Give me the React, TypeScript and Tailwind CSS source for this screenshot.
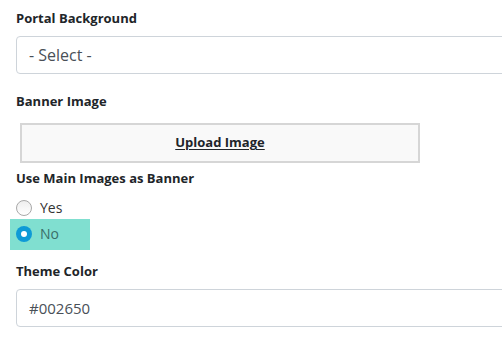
import React from "react";

export default function App() {
  return (
    <div
      className="w-[502px] h-[345px] overflow-hidden bg-white text-[#212529]"
      style={{ fontFamily: '"Open Sans", "Noto Sans", sans-serif' }}
    >
      <div className="pt-[8px]">
        <div className="pl-4 h-5 leading-5 text-[13px] font-bold">Portal Background</div>
        <div className="ml-4 mt-2 w-[520px] h-[38px] border border-[#ced4da] rounded-[4px] flex items-center pl-3 text-[16px] text-[#495057]">
          - Select -
        </div>
        <div className="pl-4 mt-[17px] h-5 leading-5 text-[13px] font-bold">Banner Image</div>
        <div className="ml-5 mt-3 w-[400px] h-10 border-2 border-[#d6d6d6] bg-[#f9f9f9] flex items-center justify-center">
          <span className="text-[13px] font-bold underline underline-offset-2">Upload Image</span>
        </div>
        <div className="pl-4 mt-[5px] h-5 leading-5 text-[13px] font-bold">Use Main Images as Banner</div>
        <div>
          <div className="ml-[10px] w-[80px] h-[31px] pt-[8px] flex items-center pl-[6px] gap-2">
            <span className="w-4 h-4 rounded-full border border-[#a8a8a8] bg-gradient-to-b from-[#eeeeee] to-white" />
            <span className="text-[14px] text-[#333]">Yes</span>
          </div>
          <div className="ml-[10px] w-[80px] h-[31px] pb-[2px] flex items-center pl-[6px] gap-2 bg-[#80dfd0]">
            <span className="w-4 h-4 rounded-full bg-[#0e9ad6] flex items-center justify-center">
              <span className="w-[6px] h-[6px] rounded-full bg-white" />
            </span>
            <span className="text-[14px] text-[#3a6e68]">No</span>
          </div>
        </div>
        <div className="pl-4 mt-[11px] h-5 leading-5 text-[13px] font-bold">Theme Color</div>
        <div className="ml-4 mt-2 w-[520px] h-[38px] border border-[#ced4da] rounded-[4px] flex items-center pl-3 text-[15px] text-[#495057]">
          #002650
        </div>
      </div>
    </div>
  );
}
